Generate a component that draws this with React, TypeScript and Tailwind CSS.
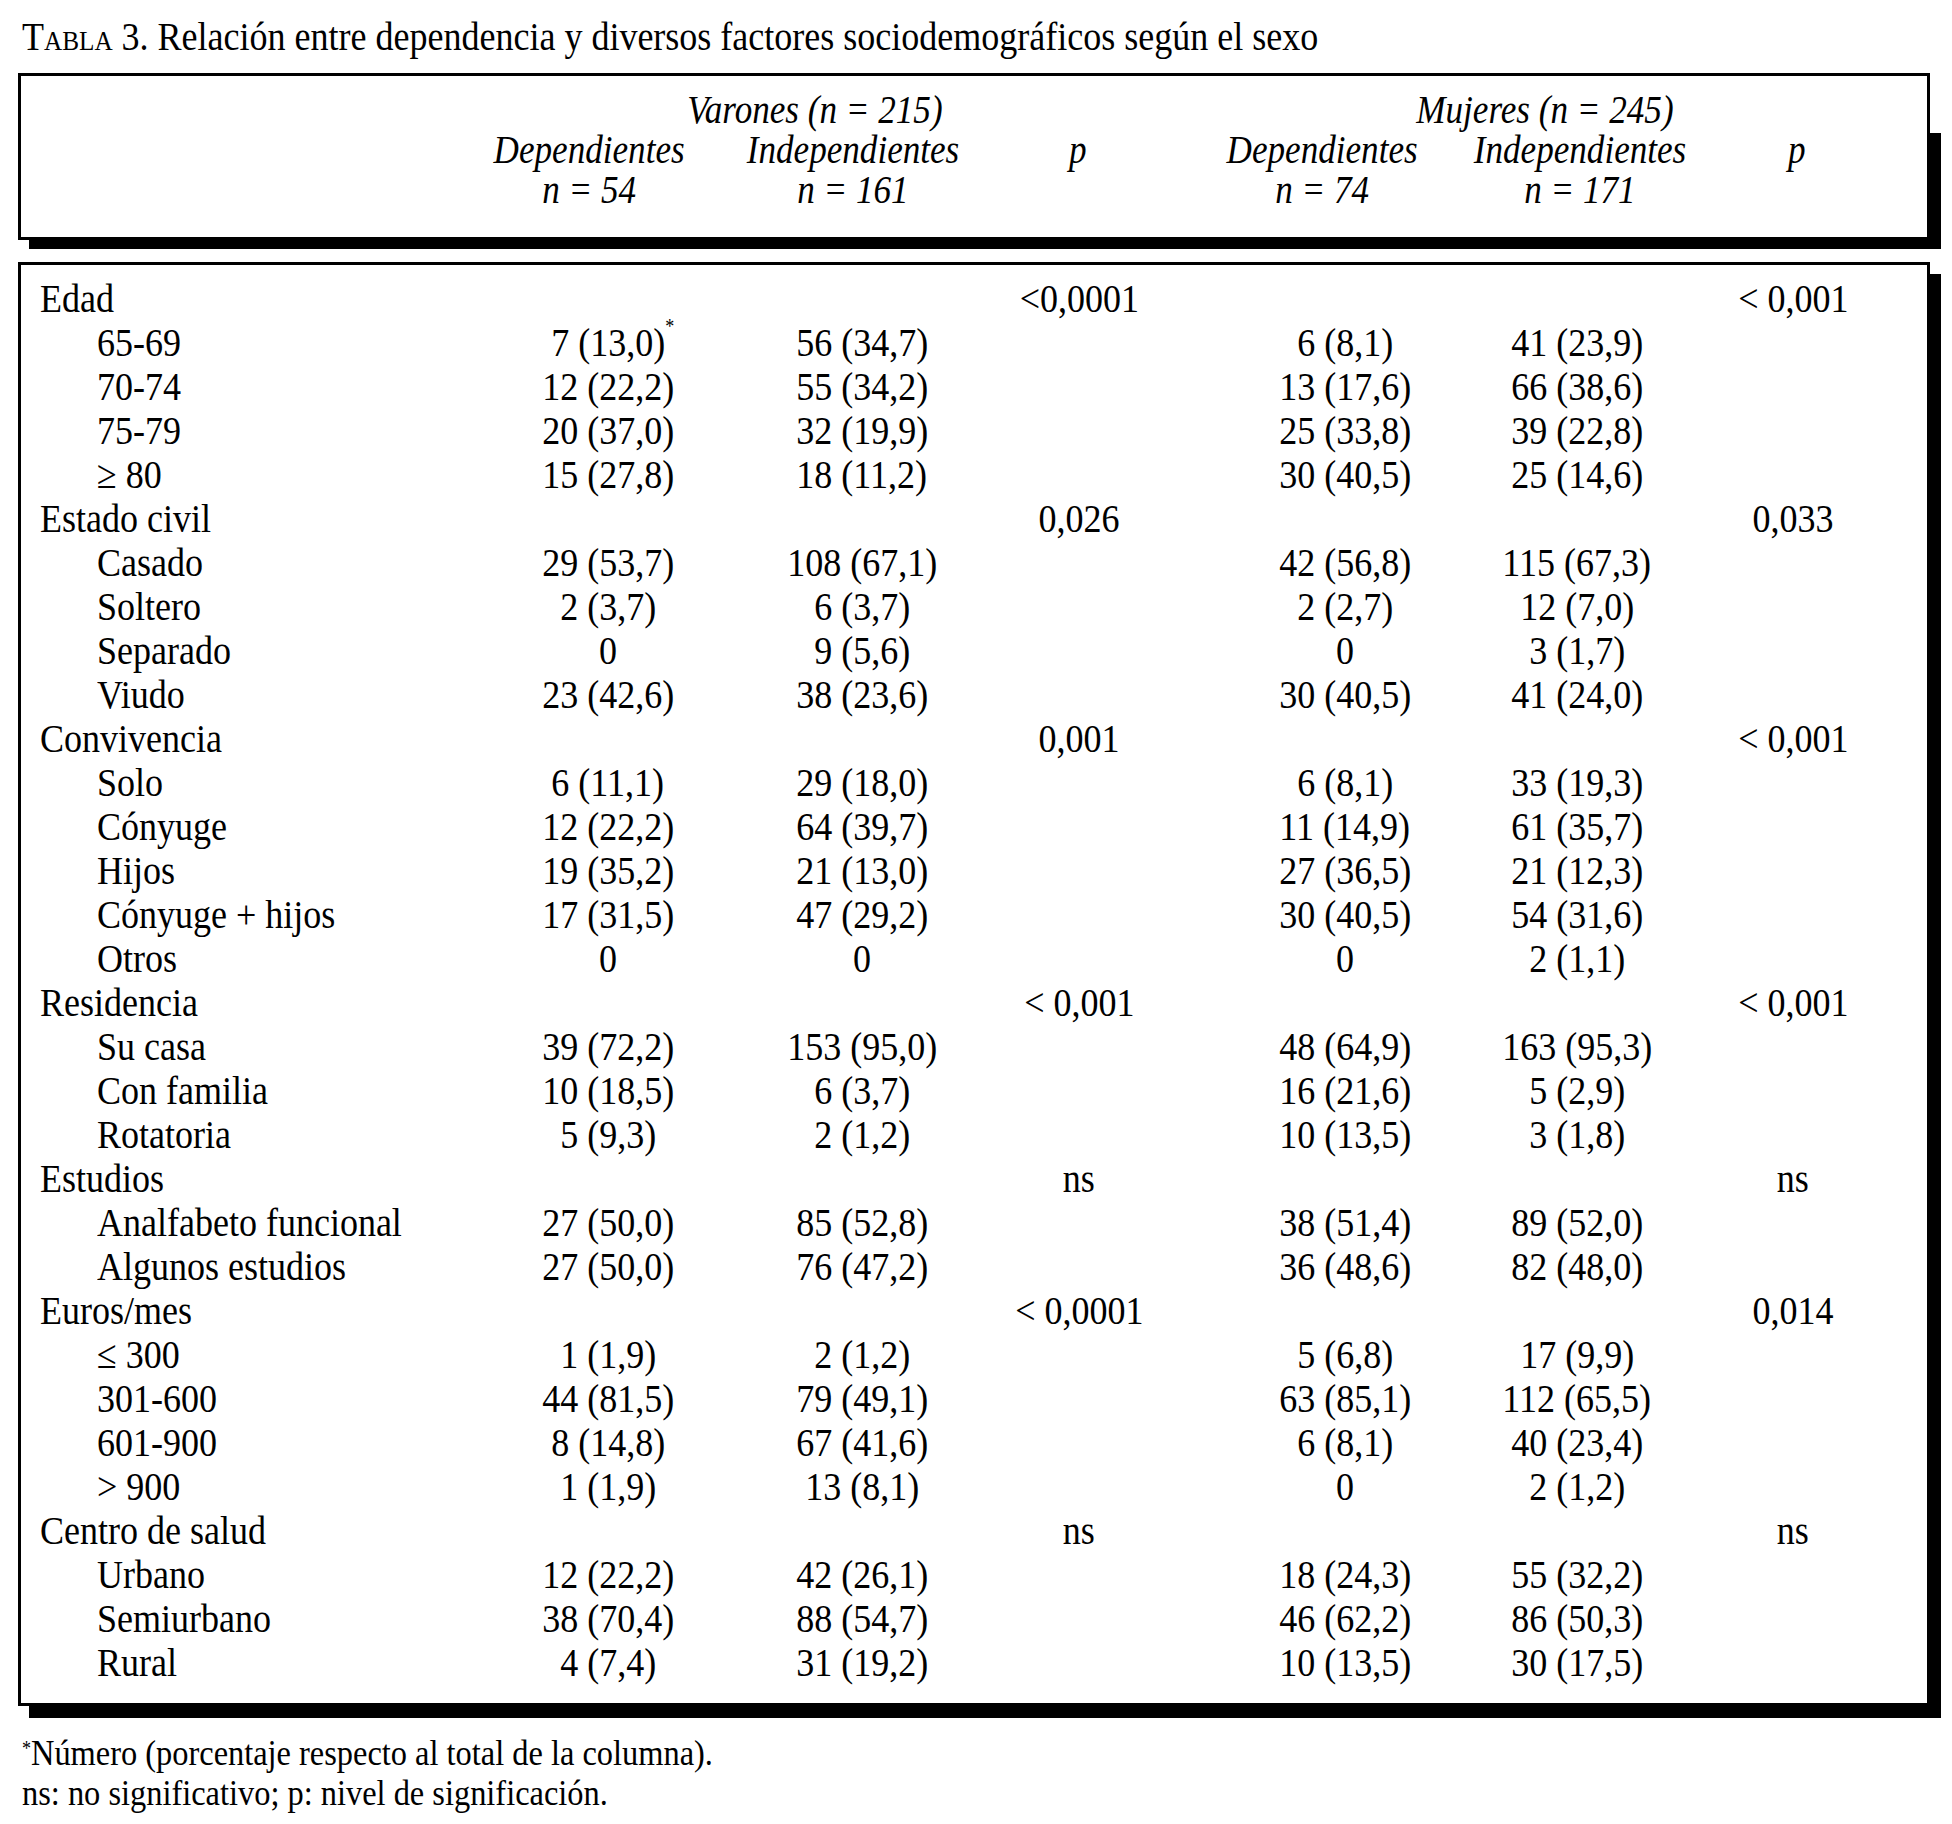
type Row = [string, string, string, string, string];

type Group = {
  label: string;
  p1: string;
  p2: string;
  rows: Row[];
};

const GROUPS: Group[] = [
  {
    label: "Edad",
    p1: "<0,0001",
    p2: "< 0,001",
    rows: [
      ["65-69", "7 (13,0)", "56 (34,7)", "6 (8,1)", "41 (23,9)"],
      ["70-74", "12 (22,2)", "55 (34,2)", "13 (17,6)", "66 (38,6)"],
      ["75-79", "20 (37,0)", "32 (19,9)", "25 (33,8)", "39 (22,8)"],
      ["≥ 80", "15 (27,8)", "18 (11,2)", "30 (40,5)", "25 (14,6)"],
    ],
  },
  {
    label: "Estado civil",
    p1: "0,026",
    p2: "0,033",
    rows: [
      ["Casado", "29 (53,7)", "108 (67,1)", "42 (56,8)", "115 (67,3)"],
      ["Soltero", "2 (3,7)", "6 (3,7)", "2 (2,7)", "12 (7,0)"],
      ["Separado", "0", "9 (5,6)", "0", "3 (1,7)"],
      ["Viudo", "23 (42,6)", "38 (23,6)", "30 (40,5)", "41 (24,0)"],
    ],
  },
  {
    label: "Convivencia",
    p1: "0,001",
    p2: "< 0,001",
    rows: [
      ["Solo", "6 (11,1)", "29 (18,0)", "6 (8,1)", "33 (19,3)"],
      ["Cónyuge", "12 (22,2)", "64 (39,7)", "11 (14,9)", "61 (35,7)"],
      ["Hijos", "19 (35,2)", "21 (13,0)", "27 (36,5)", "21 (12,3)"],
      ["Cónyuge + hijos", "17 (31,5)", "47 (29,2)", "30 (40,5)", "54 (31,6)"],
      ["Otros", "0", "0", "0", "2 (1,1)"],
    ],
  },
  {
    label: "Residencia",
    p1: "< 0,001",
    p2: "< 0,001",
    rows: [
      ["Su casa", "39 (72,2)", "153 (95,0)", "48 (64,9)", "163 (95,3)"],
      ["Con familia", "10 (18,5)", "6 (3,7)", "16 (21,6)", "5 (2,9)"],
      ["Rotatoria", "5 (9,3)", "2 (1,2)", "10 (13,5)", "3 (1,8)"],
    ],
  },
  {
    label: "Estudios",
    p1: "ns",
    p2: "ns",
    rows: [
      ["Analfabeto funcional", "27 (50,0)", "85 (52,8)", "38 (51,4)", "89 (52,0)"],
      ["Algunos estudios", "27 (50,0)", "76 (47,2)", "36 (48,6)", "82 (48,0)"],
    ],
  },
  {
    label: "Euros/mes",
    p1: "< 0,0001",
    p2: "0,014",
    rows: [
      ["≤ 300", "1 (1,9)", "2 (1,2)", "5 (6,8)", "17 (9,9)"],
      ["301-600", "44 (81,5)", "79 (49,1)", "63 (85,1)", "112 (65,5)"],
      ["601-900", "8 (14,8)", "67 (41,6)", "6 (8,1)", "40 (23,4)"],
      ["> 900", "1 (1,9)", "13 (8,1)", "0", "2 (1,2)"],
    ],
  },
  {
    label: "Centro de salud",
    p1: "ns",
    p2: "ns",
    rows: [
      ["Urbano", "12 (22,2)", "42 (26,1)", "18 (24,3)", "55 (32,2)"],
      ["Semiurbano", "38 (70,4)", "88 (54,7)", "46 (62,2)", "86 (50,3)"],
      ["Rural", "4 (7,4)", "31 (19,2)", "10 (13,5)", "30 (17,5)"],
    ],
  },
];

// value columns of the body: 200px wide, text centred
const BODY_COLS = ["ml-0", "ml-[54px]", "ml-[17px]", "ml-[66px]", "ml-[32px]", "ml-[16px]"];
// header columns: wide enough for "Independientes" so centring never overflows
const HEAD_COLS = [
  "w-[260px]",
  "ml-[4px] w-[260px]",
  "ml-[65px] w-[60px]",
  "ml-[84px] w-[260px]",
  "-ml-[2px] w-[260px]",
  "ml-[57px] w-[60px]",
];

// the source typeface is a condensed Times: squeeze the glyphs horizontally
function Narrow({ children, left }: { children: React.ReactNode; left?: boolean }) {
  return (
    <span className={left ? "inline-block origin-left scale-x-90" : "inline-block origin-center scale-x-90"}>
      {children}
    </span>
  );
}

function BodyRow({ label, cells, sub }: { label: string; cells: string[]; sub?: boolean }) {
  return (
    <div className="flex h-[44px] items-center leading-[44px] whitespace-nowrap">
      <div className={sub ? "w-[487px] pl-[76px]" : "w-[487px] pl-[19px]"}>
        <Narrow left>{label}</Narrow>
      </div>
      {cells.map((c, i) => (
        <div key={i} className={`w-[200px] shrink-0 text-center ${BODY_COLS[i]}`}>
          {c && (
            <Narrow>
              {c === "7 (13,0)" ? (
                <span className="relative">
                  {c}
                  <span className="absolute left-full top-[-4px] text-[20px] leading-none">*</span>
                </span>
              ) : (
                c
              )}
            </Narrow>
          )}
        </div>
      ))}
    </div>
  );
}

function HeadLine({ items }: { items: string[] }) {
  return (
    <div className="flex h-[40px]">
      <div className="w-[438px] shrink-0" />
      {items.map((h, i) => (
        <div key={i} className={`shrink-0 text-center ${HEAD_COLS[i]}`}>
          {h && <Narrow>{h}</Narrow>}
        </div>
      ))}
    </div>
  );
}

export default function App() {
  return (
    <div className="min-h-[1824px] w-[1952px] bg-white pl-[18px] pt-[15px] font-['Liberation_Serif',serif] text-[40px] text-black">
      <div className="ml-[4px] leading-[44px] whitespace-nowrap">
        <Narrow left>
          <span className="[font-variant:small-caps]">Tabla</span> 3. Relación entre dependencia y diversos
          factores sociodemográficos según el sexo
        </Narrow>
      </div>

      {/* header box */}
      <div className="relative mt-[14px] w-[1912px]">
        <div className="h-[167px] border-[3px] border-black bg-white pt-[14px] text-[39px] italic leading-[40px] whitespace-nowrap">
          <div className="flex h-[40px]">
            <div className="ml-[594px] w-[400px] shrink-0 text-center">
              <Narrow>Varones (n = 215)</Narrow>
            </div>
            <div className="ml-[330px] w-[400px] shrink-0 text-center">
              <Narrow>Mujeres (n = 245)</Narrow>
            </div>
          </div>
          <HeadLine items={["Dependientes", "Independientes", "p", "Dependientes", "Independientes", "p"]} />
          <HeadLine items={["n = 54", "n = 161", "", "n = 74", "n = 171", ""]} />
        </div>
        <div className="absolute -bottom-[9px] left-[11px] -right-[11px] h-[9px] bg-black" />
        <div className="absolute -right-[11px] top-[60px] bottom-0 w-[11px] bg-black" />
      </div>

      {/* body box */}
      <div className="mt-[22px] w-[1912px] border-[3px] border-black bg-white pt-[12px] pb-[18px] shadow-[11px_12px_0_0_#000]">
        {GROUPS.map((g) => (
          <div key={g.label}>
            <BodyRow label={g.label} cells={["", "", g.p1, "", "", g.p2]} />
            {g.rows.map((r) => (
              <BodyRow key={r[0]} sub label={r[0]} cells={[r[1], r[2], "", r[3], r[4], ""]} />
            ))}
          </div>
        ))}
      </div>

      {/* footnotes */}
      <div className="ml-[4px] mt-[27px] text-[36px] leading-[40px] whitespace-nowrap">
        <div>
          <Narrow left>
            <sup className="text-[20px]">*</sup>Número (porcentaje respecto al total de la columna).
          </Narrow>
        </div>
        <div>
          <Narrow left>ns: no significativo; p: nivel de significación.</Narrow>
        </div>
      </div>
    </div>
  );
}
